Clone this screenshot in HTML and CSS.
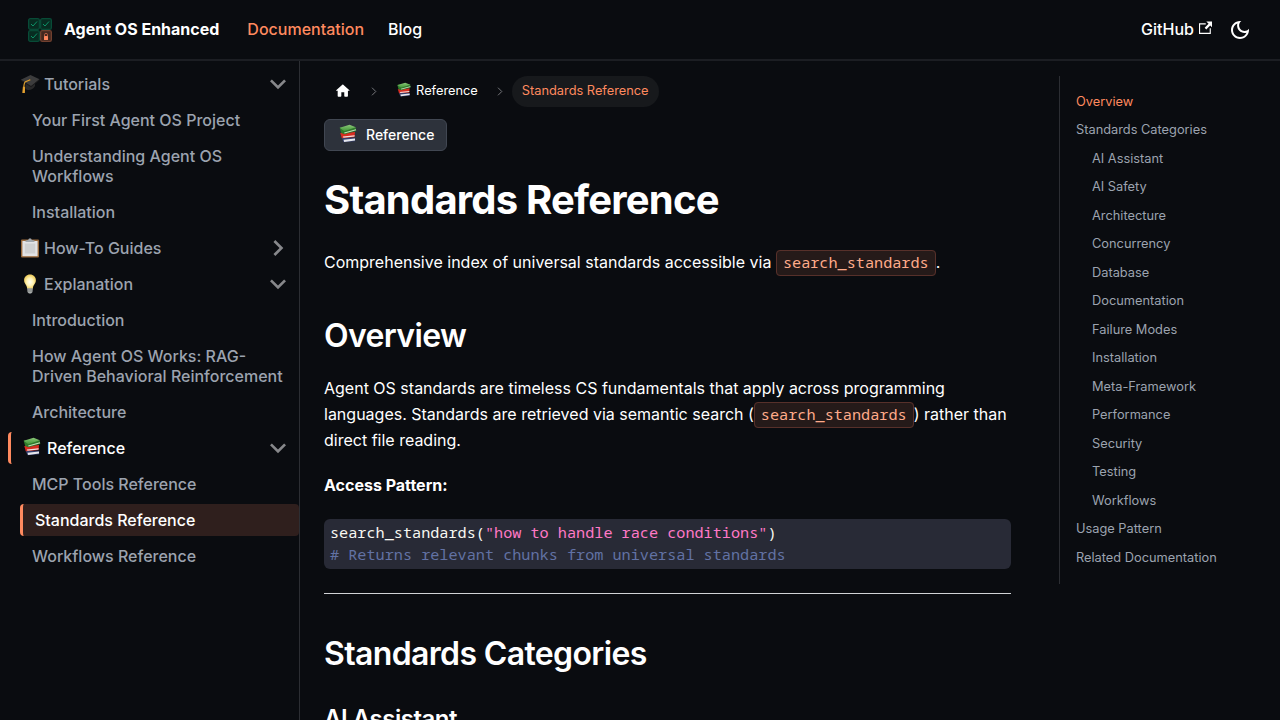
FILE: index.html
```html
<!DOCTYPE html>
<html lang="en">
<head>
<meta charset="utf-8">
<title>Standards Reference | Agent OS Enhanced</title>
<link rel="stylesheet" href="styles.css">
</head>
<body>
<svg class="symbols" aria-hidden="true">
  <defs>
    <linearGradient id="green" x2="0" y2="1"><stop stop-color="#8bc878"/><stop offset="1" stop-color="#3e9435"/></linearGradient>
    <radialGradient id="glow" cy=".55"><stop stop-color="#fffef4"/><stop offset=".55" stop-color="#fff3b4"/><stop offset="1" stop-color="#efcf63"/></radialGradient>
  </defs>
  <symbol id="books" viewBox="0 0 20 20">
    <path d="M3.500 13.500l2 4.700 11.700-1v-3.500z" fill="#343e6d"/>
    <path d="M5.500 15.700l11.500-1.300v2L6.200 17.900z" fill="#e6e7ec"/>
    <path d="M2.300 9l1.500 5.200 12.800-1.100.4-5.200z" fill="#d72c20"/>
    <path d="M4.800 12.500l11.900-1.200-.2 1.300-11 1.100z" fill="#f1dfdf"/>
    <path d="M1.700 3.700l1.500 5.300 3.300 1.200L18.300 7l-.6-3.800z" fill="#2f7a2b"/>
    <path d="M6.200 8.500l11.700-3.200.2 1L6.500 9.500z" fill="#c8dfbd"/>
    <path d="M1.700 3.700L11.600.8l6.200 2.500-11.500 4z" fill="url(#green)"/>
  </symbol>
  <symbol id="cap" viewBox="0 0 20 20">
    <path d="M5.500 8v6.500c2 3 7.500 1.500 9.500-2.500V7z" fill="#29292a"/>
    <path d="M.8 5.800L10.500.9l9 4.400-8.500 7.200z" fill="#3c3c3d"/>
    <path d="M.8 5.800l10.200 6.100 8.500-6.600v.9L11 13.300.8 6.700z" fill="#19191a"/>
    <path d="M10.300 5.800L5.500 7.800C4.200 8.500 3.900 10 3.800 14" fill="none" stroke="#e0a02e" stroke-width="1.200"/>
    <path d="M2.900 12.800h2.200l-.2 6.200H2.300z" fill="#e3a02f"/>
  </symbol>
  <symbol id="clipboard" viewBox="0 0 20 20">
    <rect x="1" y="1.500" width="18" height="18" rx="1" fill="#9a6a3c"/>
    <path d="M2.400 3h15.200v15.200H2.400z" fill="#e3e3e5"/>
    <path d="M4.800 5.500h10.400v10H4.800z" fill="#cfd0d1"/>
    <path d="M5.500 4V2.400L8.200 2 9 .5h2l.8 1.500 2.700.4V4z" fill="#a1a7ad"/>
  </symbol>
  <symbol id="bulb" viewBox="0 0 20 20">
    <path d="M7.100 13.500h5.800l-.5 4.700-1.400 1.300H9l-1.400-1.300z" fill="#aaaead"/>
    <path d="M7.300 15h5.300M7.500 17h4.900" stroke="#686b69" stroke-width=".7"/>
    <path d="M10 .4c-3.400 0-5.900 2.500-5.900 5.800 0 3.500 2.700 4.300 3 8h5.800c.3-3.700 3-4.500 3-8C15.900 2.900 13.400.4 10 .4z" fill="url(#glow)"/>
  </symbol>
</svg>
<header class="navbar">
  <a class="brand"><svg class="logo" viewBox="0 0 24 24" width="24" height="24">
    <g fill="#072c21" stroke="#084b37" stroke-width="1.300"><rect x=".65" y=".65" width="10.700" height="10.700" rx="1.600"/><rect x="12.650" y=".65" width="10.700" height="10.700" rx="1.600"/><rect x=".65" y="12.650" width="10.700" height="10.700" rx="1.600"/></g>
    <path d="M3 6l2 2 4-4.500M15 6l2 2 4-4.500M3 18l2 2 4-4.500" fill="none" stroke="#0c9367"/>
    <rect x="12.650" y="12.650" width="10.700" height="10.700" rx="1.600" fill="#43271f" stroke="#70402f" stroke-width="1.300"/>
    <path d="M16.500 18v-1.200a1.500 1.500 0 013 0V18" fill="none" stroke="#b65d43"/><rect x="16" y="18" width="4" height="4" rx=".5" fill="#ff855d"/>
  </svg><b class="brand-name">Agent OS Enhanced</b></a>
  <a class="nav-link active">Documentation</a>
  <a class="nav-link">Blog</a>
  <a class="nav-link github">GitHub<svg class="external" width="13.500" height="13.500" viewBox="0 0 24 24"><path fill="currentColor" d="M21 13v10h-21v-19h12v2h-10v15h17v-8h2zm3-12h-10.988l4.035 4-6.977 7.070 2.828 2.828 6.977-7.070 4.125 4.172v-11z"/></svg></a>
  <svg class="moon" width="24" height="24" viewBox="0 0 24 24"><path fill="currentColor" d="M9.370,5.510C9.190,6.150,9.100,6.820,9.100,7.500c0,4.080,3.320,7.400,7.400,7.400c0.680,0,1.350-0.090,1.990-0.270C17.450,17.190,14.930,19,12,19 c-3.860,0-7-3.140-7-7C5,9.070,6.810,6.550,9.370,5.510z M12,3c-4.970,0-9,4.030-9,9s4.030,9,9,9s9-4.030,9-9c0-0.460-0.040-0.920-0.100-1.360 c-0.980,1.370-2.580,2.260-4.400,2.260c-2.980,0-5.400-2.420-5.400-5.400c0-1.810,0.890-3.420,2.260-4.400C12.920,3.040,12.460,3,12,3L12,3z"/></svg>
</header>
<div class="layout">
  <nav class="sidebar">
    <a class="item category"><svg class="emoji"><use href="#cap"/></svg>Tutorials<svg class="caret" viewBox="0 0 24 24"><path d="M7.410 8.590L12 13.170l4.590-4.580L18 10l-6 6-6-6z"/></svg></a>
    <a class="item sub">Your First Agent OS Project</a>
    <a class="item sub">Understanding Agent OS Workflows</a>
    <a class="item sub">Installation</a>
    <a class="item category"><svg class="emoji"><use href="#clipboard"/></svg>How-To Guides<svg class="caret closed" viewBox="0 0 24 24"><path d="M7.410 8.590L12 13.170l4.590-4.580L18 10l-6 6-6-6z"/></svg></a>
    <a class="item category"><svg class="emoji"><use href="#bulb"/></svg>Explanation<svg class="caret" viewBox="0 0 24 24"><path d="M7.410 8.590L12 13.170l4.590-4.580L18 10l-6 6-6-6z"/></svg></a>
    <a class="item sub">Introduction</a>
    <a class="item sub">How Agent OS Works: RAG-Driven Behavioral Reinforcement</a>
    <a class="item sub">Architecture</a>
    <a class="item category open"><svg class="emoji"><use href="#books"/></svg>Reference<svg class="caret" viewBox="0 0 24 24"><path d="M7.410 8.590L12 13.170l4.590-4.580L18 10l-6 6-6-6z"/></svg></a>
    <a class="item sub">MCP Tools Reference</a>
    <a class="item sub current">Standards Reference</a>
    <a class="item sub">Workflows Reference</a>
  </nav>
  <main class="content">
    <div class="crumbs">
      <a class="crumb home"><svg width="17.600" height="17.600" viewBox="0 0 24 24"><path fill="currentColor" d="M10 19v-5h4v5c0 .55.450 1 1 1h3c.550 0 1-.450 1-1v-7h1.700c.460 0 .680-.570.330-.870L12.670 3.600c-.380-.340-.960-.340-1.340 0l-8.360 7.530c-.340.300-.130.870.330.870H5v7c0 .550.450 1 1 1h3c.550 0 1-.450 1-1z"/></svg></a>
      <svg class="sep" viewBox="0 0 6 9"><path d="M1 .7L4.800 4.500 1 8.300"/></svg>
      <a class="crumb book-crumb"><svg class="emoji"><use href="#books"/></svg>Reference</a>
      <svg class="sep" viewBox="0 0 6 9"><path d="M1 .7L4.800 4.500 1 8.300"/></svg>
      <a class="crumb now">Standards Reference</a>
    </div>
    <div class="badge"><svg class="emoji"><use href="#books"/></svg>Reference</div>
    <h1>Standards Reference</h1>
    <p>Comprehensive index of universal standards accessible via <code>search_standards</code>.</p>
    <h2>Overview</h2>
    <p>Agent OS standards are timeless CS fundamentals that apply across programming languages. Standards are retrieved via semantic search (<code>search_standards</code>) rather than direct file reading.</p>
    <p class="pattern"><strong>Access Pattern:</strong></p>
    <pre>search_standards(<span class="string">"how to handle race conditions"</span>)
<span class="comment"># Returns relevant chunks from universal standards</span></pre>
    <hr>
    <h2>Standards Categories</h2>
    <h3>AI Assistant</h3>
  </main>
  <aside class="toc">
    <a class="active">Overview</a>
    <a>Standards Categories</a>
    <a class="nested">AI Assistant</a>
    <a class="nested">AI Safety</a>
    <a class="nested">Architecture</a>
    <a class="nested">Concurrency</a>
    <a class="nested">Database</a>
    <a class="nested">Documentation</a>
    <a class="nested">Failure Modes</a>
    <a class="nested">Installation</a>
    <a class="nested">Meta-Framework</a>
    <a class="nested">Performance</a>
    <a class="nested">Security</a>
    <a class="nested">Testing</a>
    <a class="nested">Workflows</a>
    <a>Usage Pattern</a>
    <a>Related Documentation</a>
  </aside>
</div>
</body>
</html>
```

FILE: styles.css
```css
* { box-sizing: border-box; }
body { margin: 0; height: 720px; overflow: hidden; background: #0a0c10; color: #fff; font: 16px/26px Inter, sans-serif; -webkit-font-smoothing: antialiased; }
.symbols { display: block; width: 0; height: 0; }
.emoji { width: 20px; height: 20px; flex: none; }
.navbar { height: 61px; padding: 0 28px; display: flex; align-items: center; border-bottom: 2px solid #1c1e23; font-weight: 500; }
.brand { display: flex; align-items: center; gap: 12px; margin-right: 28px; }
.logo { display: block; }
.brand-name { font-weight: 700; padding-bottom: 2px; }
.nav-link { margin-right: 24px; padding-bottom: 2px; }
.active { color: #ff8a5f; }
.github { margin: 0 16px 0 auto; }
.external { margin-left: 4.5px; }
.moon { display: block; }
.layout { display: flex; height: 659px; }
.sidebar { width: 300px; flex: none; border-right: 1px solid #2c2e33; padding: 7px 0 0 8px; display: flex; flex-direction: column; gap: 4px; }
.item { display: block; padding: 6px 12px; line-height: 20px; font-weight: 500; color: #9ca3af; border-radius: 4px; }
.sub { margin-left: 12px; }
.category { display: flex; align-items: center; height: 32px; padding-right: 5px; }
.category .emoji { margin-right: 4px; }
.caret { width: 32px; height: 32px; margin-left: auto; fill: #87888b; }
.closed { transform: rotate(-90deg); }
.open { color: #fff; border-left: 3px solid #ff8a5f; }
.open .emoji { margin: -2px 5px 0 -1px; }
.current { color: #fff; background: #2f1f1d; border-left: 3px solid #ff8a5f; }
.content { width: 735px; flex: none; padding: 15px 24px 0; }
.crumbs { display: flex; align-items: center; height: 31px; font-size: 12.8px; line-height: 20px; }
.crumb { padding: 5px 10px 6px; border-radius: 26px; white-space: nowrap; }
.home svg { display: block; }
.book-crumb { display: flex; align-items: center; }
.book-crumb .emoji { width: 16px; height: 16px; margin: -2px 4px 0 0; }
.sep { width: 6px; height: 9px; margin: 0 9px; flex: none; fill: none; stroke: #75777b; }
.book-crumb { margin-left: .5px; }
.now { background: #17191c; color: #ff8a5f; }
.badge { width: 123px; height: 32px; margin-top: 12px; display: flex; align-items: center; padding: 0 12px 0 13px; background: #2d323b; border: 1px solid #414752; border-radius: 6px; font-size: 14px; font-weight: 500; }
.badge .emoji { margin: -3px 8px 0 0; }
h1 { margin: 24px 0; font-size: 40px; line-height: 50px; font-weight: 700; letter-spacing: -.8px; }
h2 { margin: 41px 0 19px; font-size: 32px; line-height: 40px; font-weight: 600; letter-spacing: -.64px; }
h3 { margin: 30px 0 20px; font-size: 24px; line-height: 30px; font-weight: 600; letter-spacing: -.48px; }
p { margin: 0 0 20px; }
.pattern { margin: -1px 0 21px; }
code, pre { font-family: "Noto Sans Mono", "DejaVu Sans Mono", monospace; font-size: 15.2px; }
code { padding: 1px 6px 3px; color: #ffab8a; background: #251a19; border: 1px solid #57302a; border-radius: 4px; }
pre { margin: 0; height: 50px; padding: 2px 6px; background: #282a36; border-radius: 6px; line-height: 22px; color: #f8f8f2; }
.string { color: #ff79c6; }
.comment { color: #6272a4; }
hr { height: 1px; border: 0; background: #d1d3d6; margin: 24px 0 0; }
hr + h2 { margin-top: 40px; }
.toc { width: 205px; height: 508px; margin: 15px 0 0 24px; padding: 15.6px 0 0 16px; border-left: 1px solid #2c2e33; display: flex; flex-direction: column; gap: 8px; font-size: 12.8px; line-height: 20.5px; color: #9ca3af; }
.nested { margin-left: 16px; }
```
